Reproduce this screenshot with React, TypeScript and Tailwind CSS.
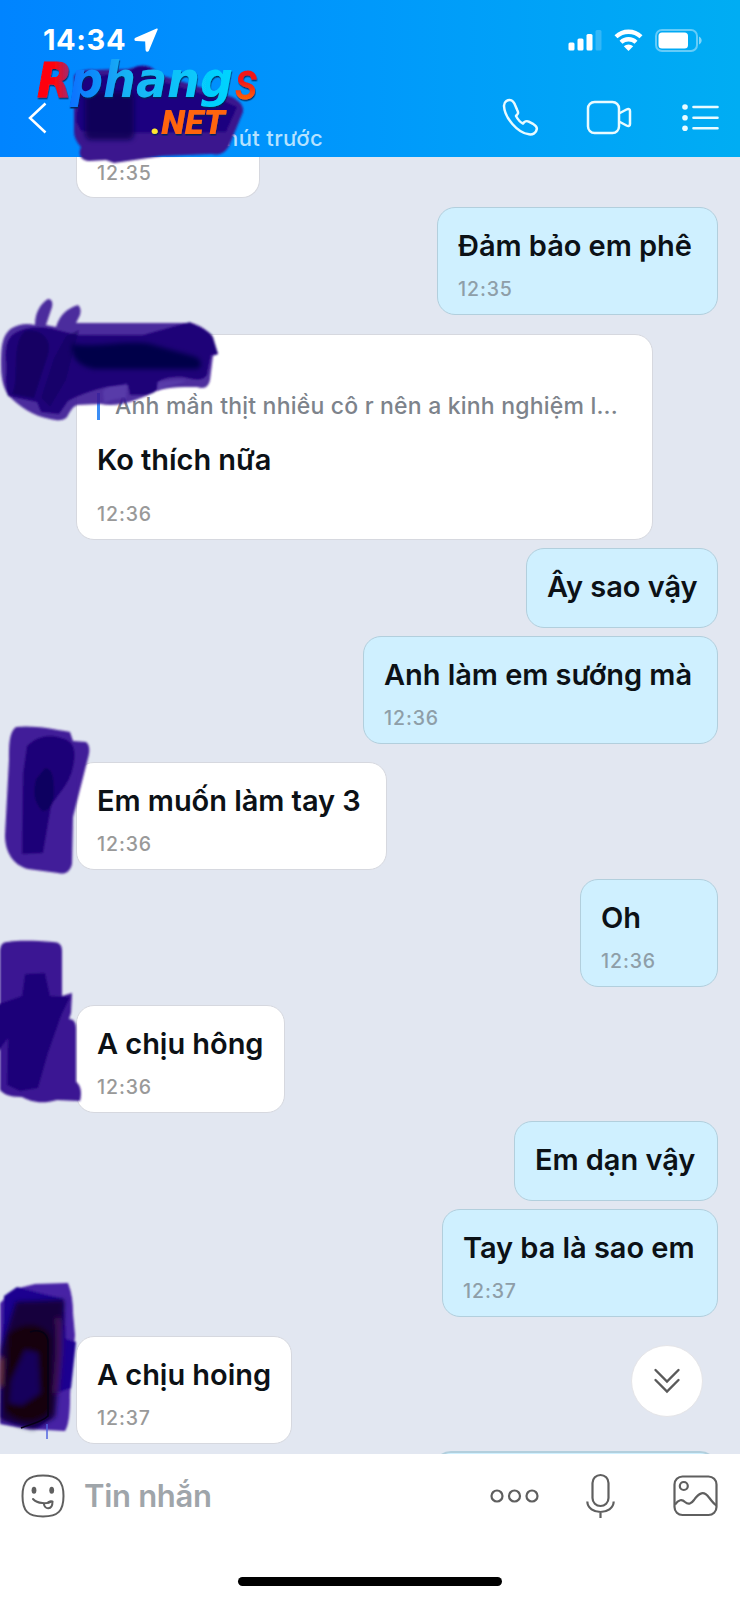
import React from "react";

type Message = {
  id: number;
  text: string;
  time?: string;
  mine?: boolean;
  quote?: string;
  box: string;
};

const messages: Message[] = [
  { id: 1, text: "Đảm bảo em phê", time: "12:35", mine: true, box: "mt-[9px] w-[281px] h-[108px]" },
  {
    id: 2,
    text: "Ko thích nữa",
    time: "12:36",
    quote: "Anh mần thịt nhiều cô r nên a kinh nghiệm l...",
    box: "mt-[19px] w-[577px] h-[206px]",
  },
  { id: 3, text: "Ây sao vậy", mine: true, box: "mt-2 w-[192px] h-[80px]" },
  { id: 4, text: "Anh làm em sướng mà", time: "12:36", mine: true, box: "mt-2 w-[355px] h-[108px]" },
  { id: 5, text: "Em muốn làm tay 3", time: "12:36", box: "mt-[18px] w-[311px] h-[108px]" },
  { id: 6, text: "Oh", time: "12:36", mine: true, box: "mt-[9px] w-[138px] h-[108px]" },
  { id: 7, text: "A chịu hông", time: "12:36", box: "mt-[18px] w-[209px] h-[108px]" },
  { id: 8, text: "Em dạn vậy", mine: true, box: "mt-2 w-[204px] h-[80px]" },
  { id: 9, text: "Tay ba là sao em", time: "12:37", mine: true, box: "mt-2 w-[276px] h-[108px]" },
  { id: 10, text: "A chịu hoing", time: "12:37", box: "mt-[19px] w-[216px] h-[108px]" },
];

const Bubble = ({ message }: { message: Message }) => {
  const { text, time, mine, quote, box } = message;
  return (
    <div
      className={`${box} shrink-0 rounded-[18px] border px-5 whitespace-nowrap ${
        mine ? "self-end border-[#b2cfdd] bg-[#cff0ff]" : "self-start border-[#d6d8df] bg-white"
      }`}
    >
      {quote && (
        <div className="mt-[58px] flex h-[27px] items-center border-l-[3px] border-[#3b8df5] pl-[15px] text-[23px] font-medium tracking-[0.2px] text-[#7d838b]">
          {quote}
        </div>
      )}
      <p
        className={`text-[29px] leading-[36px] font-[580] tracking-[-0.05px] text-[#0c1116] ${
          quote ? "mt-[22px]" : "mt-[20px]"
        }`}
      >
        {text}
      </p>
      {time && (
        <p
          className={`text-[19.5px] leading-6 font-medium tracking-[0.9px] ${quote ? "mt-[24px]" : "mt-[13px]"} ${
            mine ? "text-[#8e9ea8]" : "text-[#999]"
          }`}
        >
          {time}
        </p>
      )}
    </div>
  );
};

const Header = () => {
  return (
    <header className="flex h-[157px] shrink-0 flex-col bg-linear-to-r from-[#0084ff] via-[#0099fb] to-[#00adf3] text-white">
      {/* Status bar */}
      <div className="flex h-20 items-center justify-between pr-[38px] pl-[43px]">
        <div className="flex items-center gap-[9px]">
          <span className="w-[82px] text-[29px] font-bold tracking-[0.6px]">14:34</span>
          <svg width="25" height="24" viewBox="0 0 25 24" fill="currentColor" stroke="currentColor" strokeWidth="1.500" strokeLinejoin="round">
            <path d="M23 1.200 1.800 10.500c-1 .6-.8 1.600.3 1.700l9.800.6.4 9.200c.1 1.300 1.400 1.400 1.900.4Z" />
          </svg>
        </div>
        <div className="flex items-center gap-3">
          <svg width="34" height="22" viewBox="0 0 34 22" fill="currentColor">
            <rect x="0.500" y="13.500" width="6" height="8" rx="1.500" />
            <rect x="9.500" y="9.500" width="6" height="12" rx="1.500" />
            <rect x="18.500" y="5" width="6" height="16.500" rx="1.500" />
            <rect x="27.500" y="1" width="6" height="20.500" rx="1.500" opacity="0.200" />
          </svg>
          <svg width="29" height="22" viewBox="0 0 29 22" fill="none" stroke="currentColor" strokeWidth="4.300">
            <path d="M2 7.800a18 18 0 0 1 25 0M7 13.200a11 11 0 0 1 15 0" />
            <path d="M14.500 22 9.800 17.300a7 7 0 0 1 9.400 0Z" fill="currentColor" stroke="none" />
          </svg>
          <svg width="47" height="23" viewBox="0 0 47 23" fill="none">
            <rect x="1" y="1" width="41" height="21" rx="6" stroke="white" strokeOpacity="0.400" strokeWidth="2" />
            <rect x="3.500" y="3.500" width="29.500" height="16" rx="3.500" fill="white" />
            <path d="M44 7.500c3.500 1.500 3.500 6.500 0 8Z" fill="white" fillOpacity="0.500" />
          </svg>
        </div>
      </div>

      {/* Nav row */}
      <div className="flex h-[77px] items-start pr-[21px] pl-[28px]">
        <svg className="mt-[22px]" width="20" height="32" viewBox="0 0 20 32" fill="none" stroke="currentColor" strokeWidth="2.500">
          <path d="M17.500 1.500 2 16l15.500 14.500" />
        </svg>
        <p className="mt-[44px] w-[275px] text-right text-[22px] leading-7 font-medium tracking-[0.35px] text-[#b5e2ff]">phút trước</p>
        <div className="ml-auto flex items-start text-[#e9fbff]">
          <svg className="mt-[18px]" width="37" height="38" viewBox="0 0 37 38" fill="none" stroke="currentColor" strokeWidth="2.500" strokeLinejoin="round">
            <path d="M9.500 2.300C6 1 1.800 3.800 2 8c.5 11.500 13.500 27 25 28.300 3.700.5 7.300-1.300 7.800-5.300.3-2.200-1.300-3.600-3.300-4.800l-4.800-2.600c-2-1.100-4.400-.1-5.700 1.900-3.300-1.500-5.100-3.900-7-7.500.4-1 1.700-1.600 2-2.800.3-1-.2-2-.8-3.200l-2.800-6.400c-.6-1.300-1.300-2.700-2.900-3.300Z" />
          </svg>
          <svg className="ml-[47px] mt-[20px]" width="46" height="36" viewBox="0 0 46 36" fill="none" stroke="currentColor" strokeWidth="2.500" strokeLinejoin="round">
            <rect x="2" y="2" width="31" height="31" rx="6.500" />
            <path d="m33 13.500 7.500-4c2-1 3.500-.5 3.500 1.500v13c0 2-1.500 2.500-3.500 1.500L33 21.500" />
          </svg>
          <svg className="ml-[49px] mt-[23px]" width="38" height="30" viewBox="0 0 38 30" fill="currentColor">
            <circle cx="4" cy="4" r="2.800" />
            <circle cx="4" cy="14.700" r="2.800" />
            <circle cx="4" cy="25.300" r="2.800" />
            <path d="M12.500 4h24M12.500 14.700h24M12.500 25.300h24" stroke="currentColor" strokeWidth="2.600" strokeLinecap="round" />
          </svg>
        </div>
      </div>
    </header>
  );
};

const Footer = () => {
  return (
    <footer className="flex h-[146px] shrink-0 flex-col items-center bg-white">
      <div className="flex h-[84px] w-full items-center pr-[22px] pl-[21px] text-[#5f5f5f]">
        <svg width="44" height="44" viewBox="0 0 44 44" fill="none" stroke="currentColor" strokeWidth="2">
          <path d="M22 1.500C7 1.500 1.500 7 1.500 22S7 42.500 22 42.500 42.500 37 42.500 22 37 1.500 22 1.500Z" />
          <ellipse cx="13" cy="16.300" rx="2.400" ry="3.500" fill="currentColor" stroke="none" />
          <ellipse cx="30.700" cy="16.300" rx="2.400" ry="3.500" fill="currentColor" stroke="none" />
          <path d="M12 25c4.500 4.800 14 5.300 19 2.500" strokeLinecap="round" />
          <path d="M22.800 29.200c.5 7 8.700 7 8.700-1.500-1.500-.8-4-.5-5 1.300" />
        </svg>
        <span className="ml-[19px] text-[31px] font-[580] tracking-[-0.3px] text-[#9fa5aa]">Tin nhắn</span>
        <svg className="ml-auto" width="49" height="16" viewBox="0 0 49 16" fill="none" stroke="currentColor" strokeWidth="2.200">
          <circle cx="7" cy="8" r="5.500" />
          <circle cx="24.500" cy="8" r="5.500" />
          <circle cx="42" cy="8" r="5.500" />
        </svg>
        <svg className="ml-[47px]" width="29" height="46" viewBox="0 0 29 46" fill="none" stroke="currentColor" strokeWidth="2.200">
          <rect x="6.500" y="2" width="16" height="31" rx="8" />
          <path d="M1.300 28.500c.5 14 25.900 14 26.400 0M14.500 39.500V45" />
        </svg>
        <svg className="ml-[58px]" width="45" height="42" viewBox="0 0 45 42" fill="none" stroke="currentColor" strokeWidth="2.200">
          <rect x="1.500" y="1.500" width="42" height="38.500" rx="8" />
          <circle cx="10.800" cy="11" r="4" />
          <path d="M2 29.500c3.500-5 7-5.500 10-2.500 3.500 3 6.500 1.500 9-2 5-7.500 10-9.500 15-2.500 3 4 5 6.500 7.500 8" />
        </svg>
      </div>
      <div className="mt-[39px] h-[9px] w-[264px] rounded-full bg-black" />
    </footer>
  );
};

// Marker strokes that hide the name and avatars
const Scribbles = () => {
  return (
    <svg className="pointer-events-none absolute inset-0" width="740" height="1600" viewBox="0 0 740 1600">
      <defs>
        <filter id="soft" x="-10%" y="-10%" width="120%" height="120%">
          <feGaussianBlur stdDeviation="1.200" />
        </filter>
        <filter id="softer" x="-20%" y="-20%" width="140%" height="140%">
          <feGaussianBlur stdDeviation="2.500" />
        </filter>
      </defs>

      {/* Contact name */}
      <g filter="url(#soft)">
        <path d="M95 70c18-2 30 2 43-4 10-2 17 2 19 8l75 23c8 4 12 9 11 15l-14 34c-4 7-10 10-17 8l-50 2-48 7-8-3-17 1c-9-1-11-7-8-14-4-5-7-9-7-16V76c4-5 12-7 21-6Z" fill="#3b148e" />
        <path d="M80 81c12-10 42-2 56-14 13-3 21 5 21 13l62 19 18 8-11 25-93 1-52-2-5-10Z" fill="#1b0180" />
      </g>
      <rect x="85" y="92" width="49" height="48" rx="6" fill="#070052" opacity=".85" filter="url(#softer)" />

      {/* Quoted message sender */}
      <g filter="url(#soft)">
        <path d="M12 328c8-4 14-5 23-3 0-12 5-21 13-26 4 0 5 4 4 8l-6 18 10 2c4-12 10-18 22-22 3 3 3 6 2 10l-4 8h116c12 4 19 10 21 17l5 14-5 2-3 24c-2 8-6 9-13 7-17 0-35 0-45 6-14 7-35 15-51 11l-24 1c-5 2-7 7-10 12-4 5-12 3-17 2-17-3-30-12-41-23-5-6-8-17-8-30 0-20 1-31 11-38Z" fill="#3b1694" fillOpacity=".9" />
        <path d="M17 332c10-6 27-6 40-2l20 5h66l47-13c6 5 20 8 23 15l5 17-7 1-4 20c-4 6-12 5-24 2-10 0-16 0-24 4l-2 9c-6 6-14 5-27 5l-2-10-22 2c-15 4-27 8-38 14l-9 13-18-2-4-10-29-6c-4-14-1-24-2-34-1-13 0-25 11-30Z" fill="#1c0076" fillOpacity=".92" />
        <path d="M25 331c16-3 28 8 23 24l-14 43-22-4c8-15-2-50 13-63Z" fill="#10005b" opacity=".7" />
        <path d="m66 336 13-6-13 50-16 27-9-9 13-40Z" fill="#10005b" opacity=".5" />
      </g>
      <path d="M72 344c26 4 54-4 78 0l46 13c8 5 6 13-2 12H94c-15-3-24-12-22-25Z" fill="#060049" filter="url(#softer)" />
      <path d="M103 391c8-7 16-4 24-8l-1 15c-10 0-18 3-22 5Z" fill="#5f45b1" opacity=".6" filter="url(#soft)" />
      <path d="M157 382c8 0 20-3 30-1-8 3-20 4-30 10Z" fill="#5f45b1" opacity=".6" filter="url(#soft)" />

      {/* Avatars */}
      <g filter="url(#soft)">
        <path d="M16 727c17-2 37 2 54 5l3 9 13 1c4 3 4 9 2 16L73 817l-1 47c-2 8-7 11-14 9l-30-4c-15-4-23-17-23-34l4-75c0-15 0-28 7-33Z" fill="#3c1696" fillOpacity=".97" />
        <path d="M27 746c8-8 20-13 34-8 15 3 15 15 12 29-3 17-16 28-22 39l-8 47-21 1 1-80Z" fill="#1f0278" />
        <path d="m36 779 9-11c9 0 9 15 9 26-1 11-5 18-12 17-9-10-9-20-6-32Z" fill="#110060" />

        <path d="M8 942c13-2 28-1 45 0 6 0 9 3 9 9v45l10-3-1 20-2 6c5 0 7 4 7 9v54c5 3 6 11 4 19l-23-1c-17 5-27 1-35-3-14 0-18-3-22-7V950c1-6 3-8 8-8Z" fill="#3b1793" />
        <path d="m25 974 20-1 5 23 20 1-9 19-13 37-10 35-18 3-13-6 1-47-12 16v-49l26-9Z" fill="#1d0279" />
      </g>

      <g filter="url(#soft)">
        <path d="m15 1289 20-5 33-1c4 10 5 20 5 30l2 22-5 59c0 11 0 30-5 37l-37-2-28-5v-121Z" fill="#4720a5" />
        <path d="m4 1296 13-9 46 12 3 40 10 3-5 46-17 6-3 24-13 10-24-4-14-7Z" fill="#1c0690" />
      </g>
      <g filter="url(#softer)">
        <path d="m16 1302 48-2-2 39-7 78-22 12-32-9v-70Z" fill="#12003c" />
        <path d="M8 1334c17-16 39-9 43 4v72c-10 14-34 16-46 0Z" fill="#13020e" />
        <path d="m25 1350 13 3 2 40-18 12-13-2 2-22Z" fill="#14045c" />
        <path d="M58 1318c4 25 0 50-2 75" stroke="#45175c" strokeWidth="5" fill="none" />
        <path d="m1 1358-1 28" stroke="#874435" strokeWidth="3" fill="none" />
      </g>
      <path d="M30 1332c11-4 18 2 18 11v73c-6 6-17 8-27 12" stroke="#050014" strokeWidth="1.500" fill="none" />
      <path d="M47 1424v15" stroke="#5265df" strokeWidth="1.500" />
    </svg>
  );
};

const Watermark = () => {
  return (
    <svg
      className="pointer-events-none absolute top-[50px] left-[30px]"
      width="240"
      height="100"
      viewBox="30 50 240 100"
      fontFamily="'DejaVu Sans', sans-serif"
      fontWeight="700"
    >
      <defs>
        <linearGradient id="markR" x1="0" x2="1">
          <stop offset="0.500" stopColor="#ff0508" />
          <stop offset="1" stopColor="#8b3189" />
        </linearGradient>
        <linearGradient id="markBlue" x1="0" x2="1">
          <stop offset="0" stopColor="#0870ff" />
          <stop offset="0.350" stopColor="#18b2f4" />
          <stop offset="1" stopColor="#00d5ff" />
        </linearGradient>
        <linearGradient id="markS" x1="0" x2="0" y1="0" y2="1">
          <stop offset="0.500" stopColor="#f01418" />
          <stop offset="0.850" stopColor="#ff7000" />
        </linearGradient>
        <filter id="bevel" x="-10%" y="-10%" width="120%" height="130%">
          <feDropShadow dx="0.500" dy="1.500" stdDeviation="0.500" floodColor="#042052" floodOpacity="0.900" />
        </filter>
      </defs>
      <g filter="url(#bevel)" fontStyle="italic">
        <text x="37" y="97" fontSize="48" textLength="35" lengthAdjust="spacingAndGlyphs" fill="url(#markR)" stroke="url(#markR)">
          R
        </text>
        <text x="70" y="97" fontSize="49" textLength="163" lengthAdjust="spacingAndGlyphs" fill="url(#markBlue)">
          phang
        </text>
        <text x="151" y="134" fontSize="33" textLength="74" lengthAdjust="spacingAndGlyphs" fontFamily="Roboto, sans-serif" fontWeight="900" fill="#ff6508">
          <tspan fill="#ffe82e">.</tspan>NET
        </text>
      </g>
      <text x="235" y="99" fontSize="54" textLength="23" lengthAdjust="spacingAndGlyphs" fontFamily="Roboto, sans-serif" fontStyle="italic" fontWeight="500" fill="url(#markS)" filter="url(#bevel)">
        s
      </text>
    </svg>
  );
};

const App = () => {
  return (
    <div className="relative flex h-[1600px] w-[740px] flex-col overflow-hidden bg-[#e2e7f1] font-['Inter','Noto_Sans',sans-serif]">
      <Header />

      {/* Conversation */}
      <main className="flex min-h-0 flex-1 flex-col overflow-hidden pr-[22px] pl-[76px]">
        <div className="h-[41px] w-[184px] shrink-0 rounded-b-[18px] border border-t-0 border-[#d6d8df] bg-white px-5 pt-[4px] text-[19.5px] leading-6 font-medium tracking-[0.9px] text-[#999]">
          12:35
        </div>
        {messages.map((message) => (
          <Bubble key={message.id} message={message} />
        ))}
        <div className="mt-[7px] h-20 w-[285px] shrink-0 self-end rounded-[18px] border-2 border-[#b2cfdd] bg-[#cff0ff]" />
      </main>

      <Footer />

      <button className="absolute top-[1345px] left-[631px] flex h-[72px] w-[72px] items-center justify-center rounded-full border border-[#e5e5e8] bg-white">
        <svg width="28" height="26" viewBox="0 0 28 26" fill="none" stroke="#5a5a5a" strokeWidth="2.400" strokeLinecap="round">
          <path d="m2.500 2 11.500 11.500L25.500 2M2.500 12 14 23.500 25.500 12" />
        </svg>
      </button>

      <Scribbles />
      <Watermark />
    </div>
  );
};

export default App;
